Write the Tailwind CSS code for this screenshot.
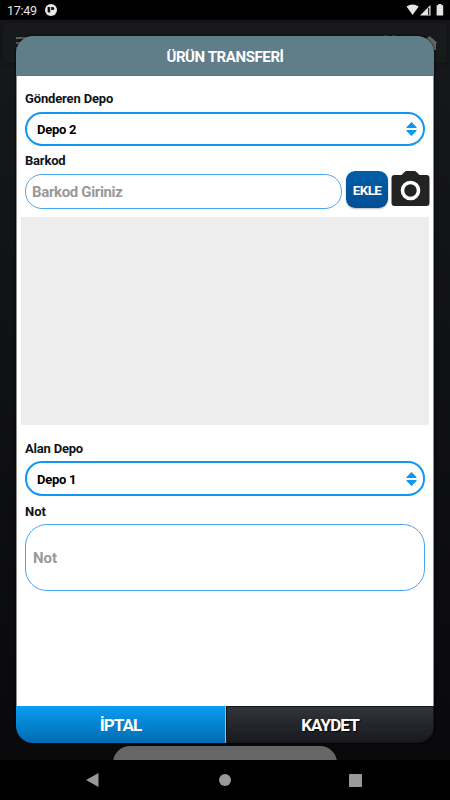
<!DOCTYPE html>
<html lang="tr">
<head>
  <meta charset="UTF-8">
  <title>Ürün Transferi</title>
  <script src="https://cdn.jsdelivr.net/npm/@tailwindcss/browser@4"></script>
</head>
<body class="w-[450px] h-[800px] overflow-hidden bg-black flex flex-col font-['Roboto','Noto_Sans',sans-serif]">

  <!-- Status bar -->
  <header class="h-5 shrink-0 bg-black flex items-center justify-between pl-[7px] pr-[6px] text-[#e4e4e4]">
    <div class="flex items-center gap-[9px]">
      <span class="w-[29px] text-[12.5px] leading-5 tracking-[-0.25px] pt-[1px]">17:49</span>
      <svg class="w-3 h-3" viewBox="0 0 12 12">
        <circle cx="6" cy="6" r="6" fill="#e8e8e8"/>
        <path d="M2.6 3h2.6v5.6H3.4L2.6 7.8ZM6.2 3h1.6q1.5 0 1.5 1.5T7.8 6H6.2Z" fill="#111"/>
      </svg>
    </div>
    <svg class="w-[38px] h-3" viewBox="0 0 38 12">
      <path d="M.5 2.6Q6.5-1.6 12.7 2.6L6.6 11Z" fill="#e4e4e4"/>
      <path d="M24.5 1V11.5H14Z" fill="#e4e4e4"/>
      <path d="M22 4h1.3v6.7H22Z" fill="#222"/>
      <path d="M32.3 0h3.2v1.2h1.7v10.3h-6.6V1.2h1.7Z" fill="#e4e4e4"/>
    </svg>
  </header>

  <main class="relative flex-1 bg-gradient-to-b from-[#16181b] to-[#09090c] overflow-hidden">

    <!-- Page behind the dialog -->
    <div class="mx-[3px] mt-[3px] h-10 bg-[#17191b] shadow-[0_0_3px_#0d0e10] flex justify-between pl-[13px] pr-[9px] pt-[12px]">
      <svg class="w-5 h-4" viewBox="0 0 20 16">
        <path d="M0 3h20M0 8h20M0 13h20" stroke="#606060" stroke-width="2"/>
      </svg>
      <div class="flex">
        <div class="w-6 flex gap-1"><i class="w-1 h-1 ml-2 bg-[#444]"></i><i class="w-1 h-1 bg-[#444]"></i></div>
        <svg class="w-[18px] h-[15px] ml-5" viewBox="0 0 18 15">
          <path d="M9.5 1 17.5 8H16v7H2.4V8H1Z" fill="#666"/>
        </svg>
      </div>
    </div>
    <div class="absolute left-[113px] top-[726px] w-[224px] h-10 rounded-[17px] bg-[#666]"></div>

    <!-- Dialog -->
    <section class="absolute left-4 top-4 w-[418px] h-[707px] rounded-[17px] overflow-hidden flex flex-col shadow-[0_0_3px_#000]">
      <div class="h-[39.5px] shrink-0 bg-[#607d8a] border-b border-[#567585] flex items-center justify-center pt-[4px]">
        <h1 class="whitespace-nowrap text-white text-[15px] font-bold tracking-[-0.4px]">ÜRÜN TRANSFERİ</h1>
      </div>

      <div class="flex-1 flex flex-col px-1 bg-white border-x border-[#8d8d8d] text-[#0e1418] font-bold">
        <label class="ml-1 mt-[14px] h-[22px] leading-[18px] text-[13px] tracking-[-0.15px]">Gönderen Depo</label>
        <div class="mx-1 h-[34.5px] shrink-0 rounded-[17px] border-2 border-[#1196f2] flex items-center justify-between pl-[10px] pr-[6px] text-black">
          <span class="text-[13px] pt-[2px] tracking-[-0.25px]">Depo 2</span>
          <svg class="w-[11px] h-[14px]" viewBox="0 0 11 14"><path d="M5.5 0 10.5 5v1H.5V5ZM.5 8h10v1l-5 5-5-5Z" fill="#1196f2"/></svg>
        </div>

        <label class="ml-1 mt-[6px] h-[18.5px] leading-[18px] text-[13px] tracking-[-0.2px]">Barkod</label>
        <div class="ml-1 -mr-1 h-[38px] flex items-start">
          <div class="mt-[3px] w-[317px] h-[35px] shrink-0 rounded-[17px] border border-[#4ba5f5] flex items-center pl-[6px] text-[#999] text-[15px] tracking-[-0.35px] pt-[2px]">Barkod Giriniz</div>
          <button class="ml-1 w-[42px] h-[37px] shrink-0 rounded-[9px] bg-gradient-to-b from-[#015fa9] to-[#014f95] shadow-[0_1px_2px_#0004] text-white text-[13.5px] font-bold tracking-[-0.6px] pt-[2px]">EKLE</button>
          <svg class="ml-[3px] w-[39px] h-[36px] shrink-0" viewBox="0 0 39 36">
            <path d="M10.5 4 13.8.7Q14.4 0 15.5 0h8Q24.6 0 25.2.7L28.5 4H35.5Q38.5 4 38.5 7V32Q38.5 35 35.5 35H3.5Q.5 35 .5 32V7Q.5 4 3.5 4Z" fill="#212325"/>
            <circle cx="19.5" cy="19.5" r="8" fill="none" stroke="#fff" stroke-width="3.6"/>
          </svg>
        </div>

        <!-- Product list, empty -->
        <div class="mt-[8px] h-[208.5px] shrink-0 bg-[#ededed]"></div>

        <label class="ml-1 mt-[14px] h-[22px] leading-[20px] text-[13px] tracking-[-0.2px]">Alan Depo</label>
        <div class="mx-1 h-[35px] shrink-0 rounded-[17px] border-2 border-[#1196f2] flex items-center justify-between pl-[10px] pr-[6px] text-black">
          <span class="text-[13px] pt-[2px] tracking-[-0.25px]">Depo 1</span>
          <svg class="w-[11px] h-[14px]" viewBox="0 0 11 14"><path d="M5.5 0 10.5 5v1H.5V5ZM.5 8h10v1l-5 5-5-5Z" fill="#1196f2"/></svg>
        </div>

        <label class="ml-1 mt-[6px] h-[21.5px] leading-[19px] text-[13px]">Not</label>
        <div class="mx-1 h-[67px] shrink-0 rounded-[22px] border border-[#4ba5f5] flex items-center pl-[7px] pt-[2px] text-[#999] text-[15px]">Not</div>
      </div>

      <div class="h-[37px] shrink-0 flex text-white text-[17px] font-bold">
        <button class="w-[209px] shrink-0 bg-gradient-to-b from-[#0b9df1] to-[#026bb2] tracking-[-0.9px] pt-[3px]">İPTAL</button>
        <div class="w-px shrink-0 bg-[#b0bac7]"></div>
        <button class="flex-1 bg-gradient-to-b from-[#30363a] to-[#17191d] border border-[#141619] tracking-[-0.9px] pt-[3px] [text-shadow:1px_1px_1px_#000]">KAYDET</button>
      </div>
    </section>
  </main>

  <!-- Android navigation -->
  <nav class="h-10 shrink-0 bg-black flex items-center justify-between pl-[86px] pr-[88px]">
    <svg class="w-[13px] h-[14px]" viewBox="0 0 13 14"><path d="M12.5 0v14L0 7Z" fill="#999"/></svg>
    <i class="relative left-px w-3 h-3 rounded-full bg-[#999]"></i>
    <i class="w-[13px] h-[13px] rounded-[1px] bg-[#999]"></i>
  </nav>
</body>
</html>
